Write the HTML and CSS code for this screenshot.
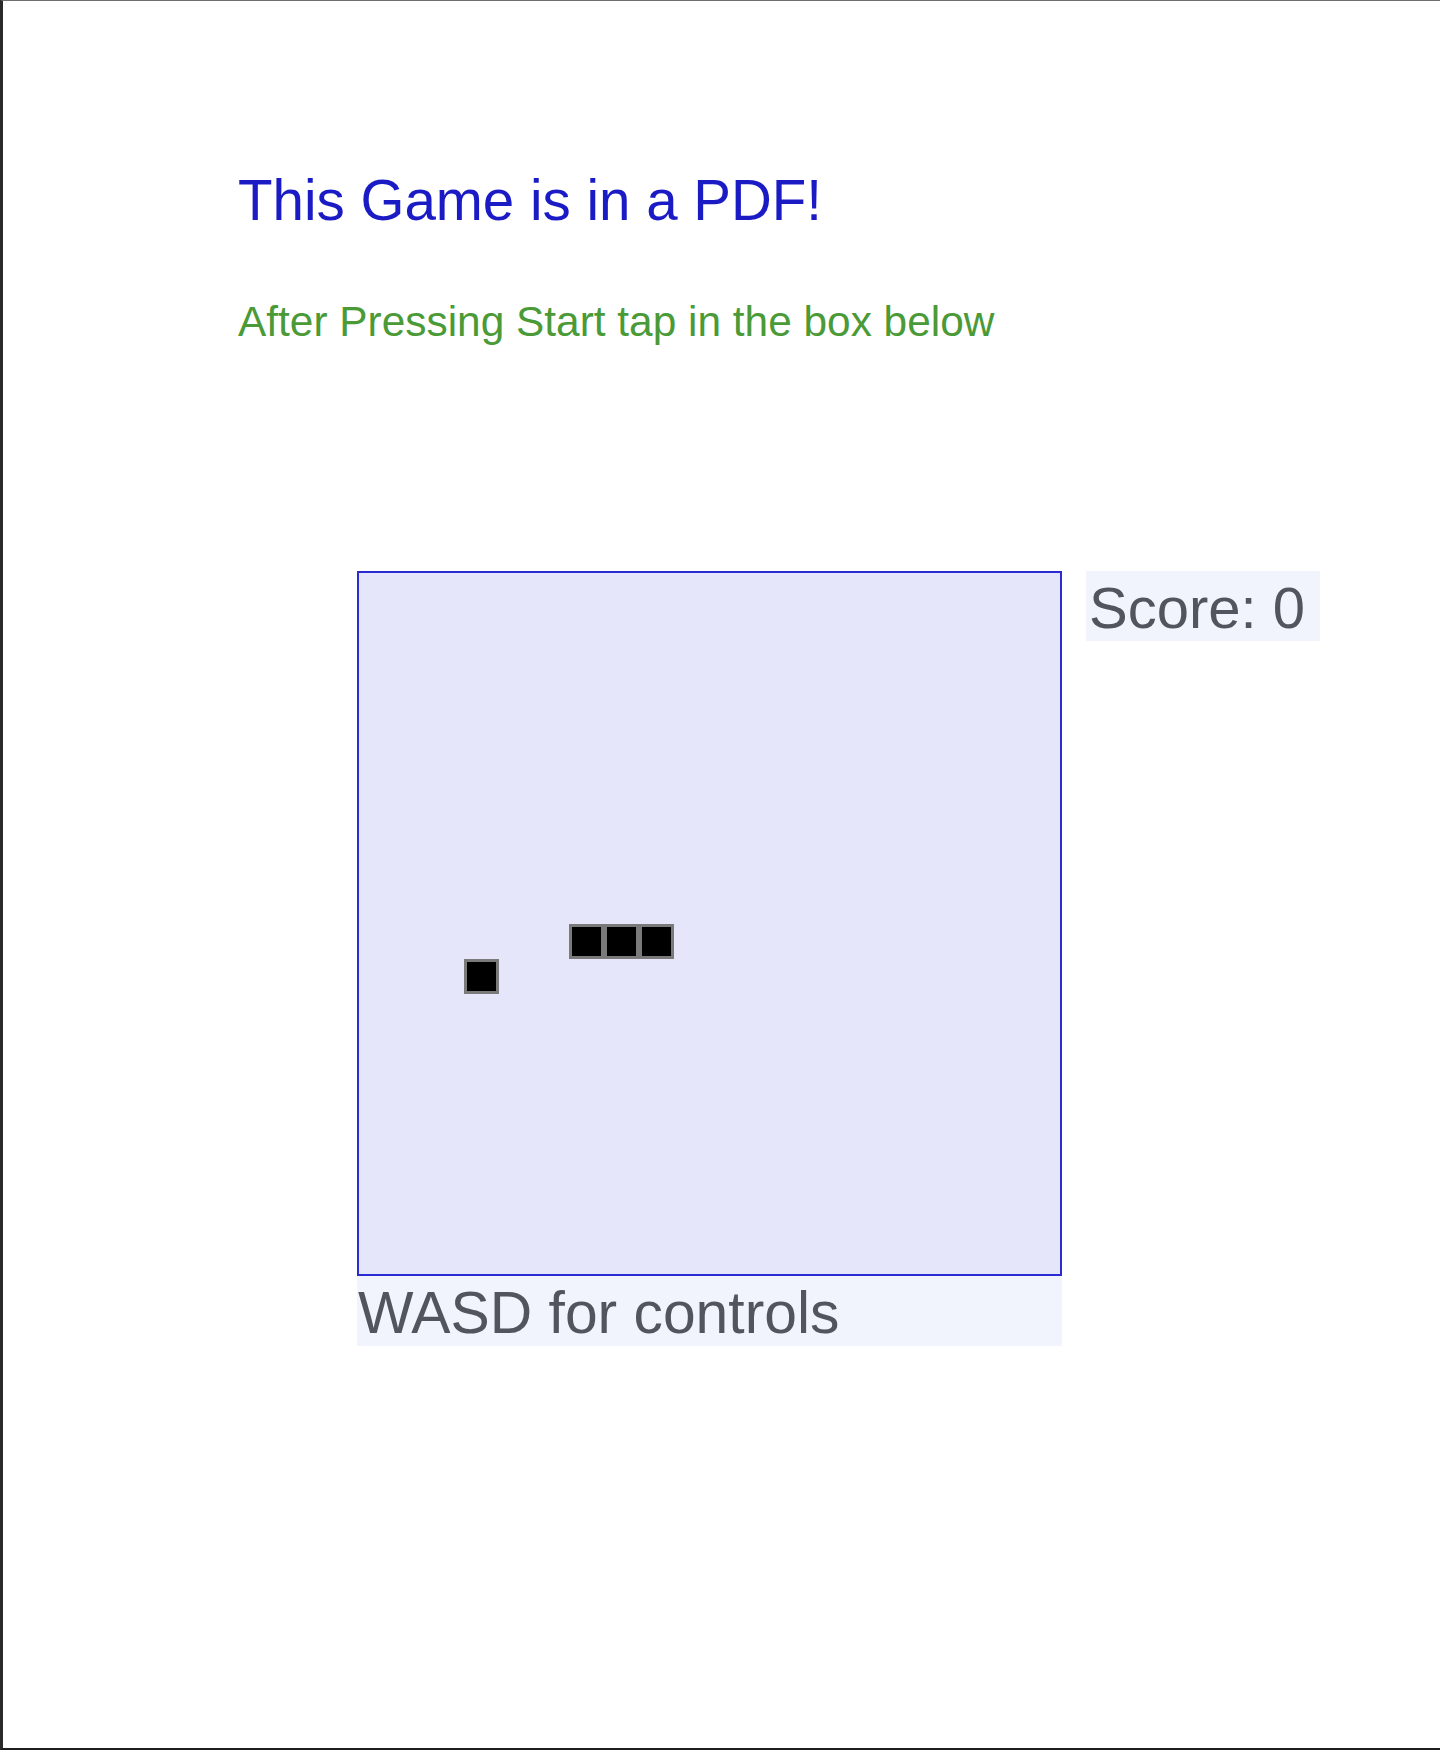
FILE: index.html
```html
<!DOCTYPE html>
<html lang="en">
<head>
<meta charset="utf-8">
<title>This Game is in a PDF!</title>
<link rel="stylesheet" href="styles.css">
</head>
<body>
<div class="page">
  <header class="intro">
    <h1 class="title">This Game is in a PDF!</h1>
    <p class="subtitle">After Pressing Start tap in the box below</p>
  </header>
  <section class="game-row">
    <div class="game-col">
      <div class="board">
        <div class="cell food" style="grid-column: 4; grid-row: 12;"></div>
        <div class="cell snake" style="grid-column: 7; grid-row: 11;"></div>
        <div class="cell snake" style="grid-column: 8; grid-row: 11;"></div>
        <div class="cell snake" style="grid-column: 9; grid-row: 11;"></div>
      </div>
      <div class="field controls">WASD for controls</div>
    </div>
    <div class="field score">Score: 0</div>
  </section>
</div>
</body>
</html>
```

FILE: styles.css
```css
html, body {
  margin: 0;
  padding: 0;
  background: #ffffff;
}

body {
  font-family: "Liberation Sans", Arial, Helvetica, sans-serif;
}

.page {
  box-sizing: border-box;
  width: 1440px;
  height: 1750px;
  border-left: 3px solid #2a2a2a;
  border-top: 1px solid #6e6e6e;
  border-bottom: 2px solid #1e1e1e;
  background: #ffffff;
  padding-top: 168px;
}

.intro {
  padding-left: 235px;
}

.title {
  margin: 0;
  font-weight: normal;
  font-size: 56.5px;
  line-height: 64px;
  color: #1b1bc6;
}

.subtitle {
  margin: 65px 0 0 0;
  font-size: 42.4px;
  line-height: 48px;
  color: #4a9a37;
}

.game-row {
  display: flex;
  align-items: flex-start;
  gap: 24px;
  margin-top: 225px;
  padding-left: 354px;
}

.game-col {
  display: flex;
  flex-direction: column;
  width: 705px;
}

.board {
  box-sizing: border-box;
  width: 705px;
  height: 705px;
  border: 2px solid #2b2bd4;
  background: #e5e6fa;
  display: grid;
  grid-template-columns: repeat(20, 1fr);
  grid-template-rows: repeat(20, 1fr);
}

.cell {
  box-sizing: border-box;
  background: #000000;
  border: 3px solid #7a7a7a;
}

.field {
  box-sizing: border-box;
  height: 70px;
  padding-top: 5px;
  font-size: 58px;
  line-height: 64px;
  color: #53555e;
  background: #f1f4fd;
  white-space: nowrap;
}

.controls {
  width: 705px;
  padding-left: 1px;
  font-size: 58.8px;
}

.score {
  width: 234px;
  padding-left: 3px;
}
```
